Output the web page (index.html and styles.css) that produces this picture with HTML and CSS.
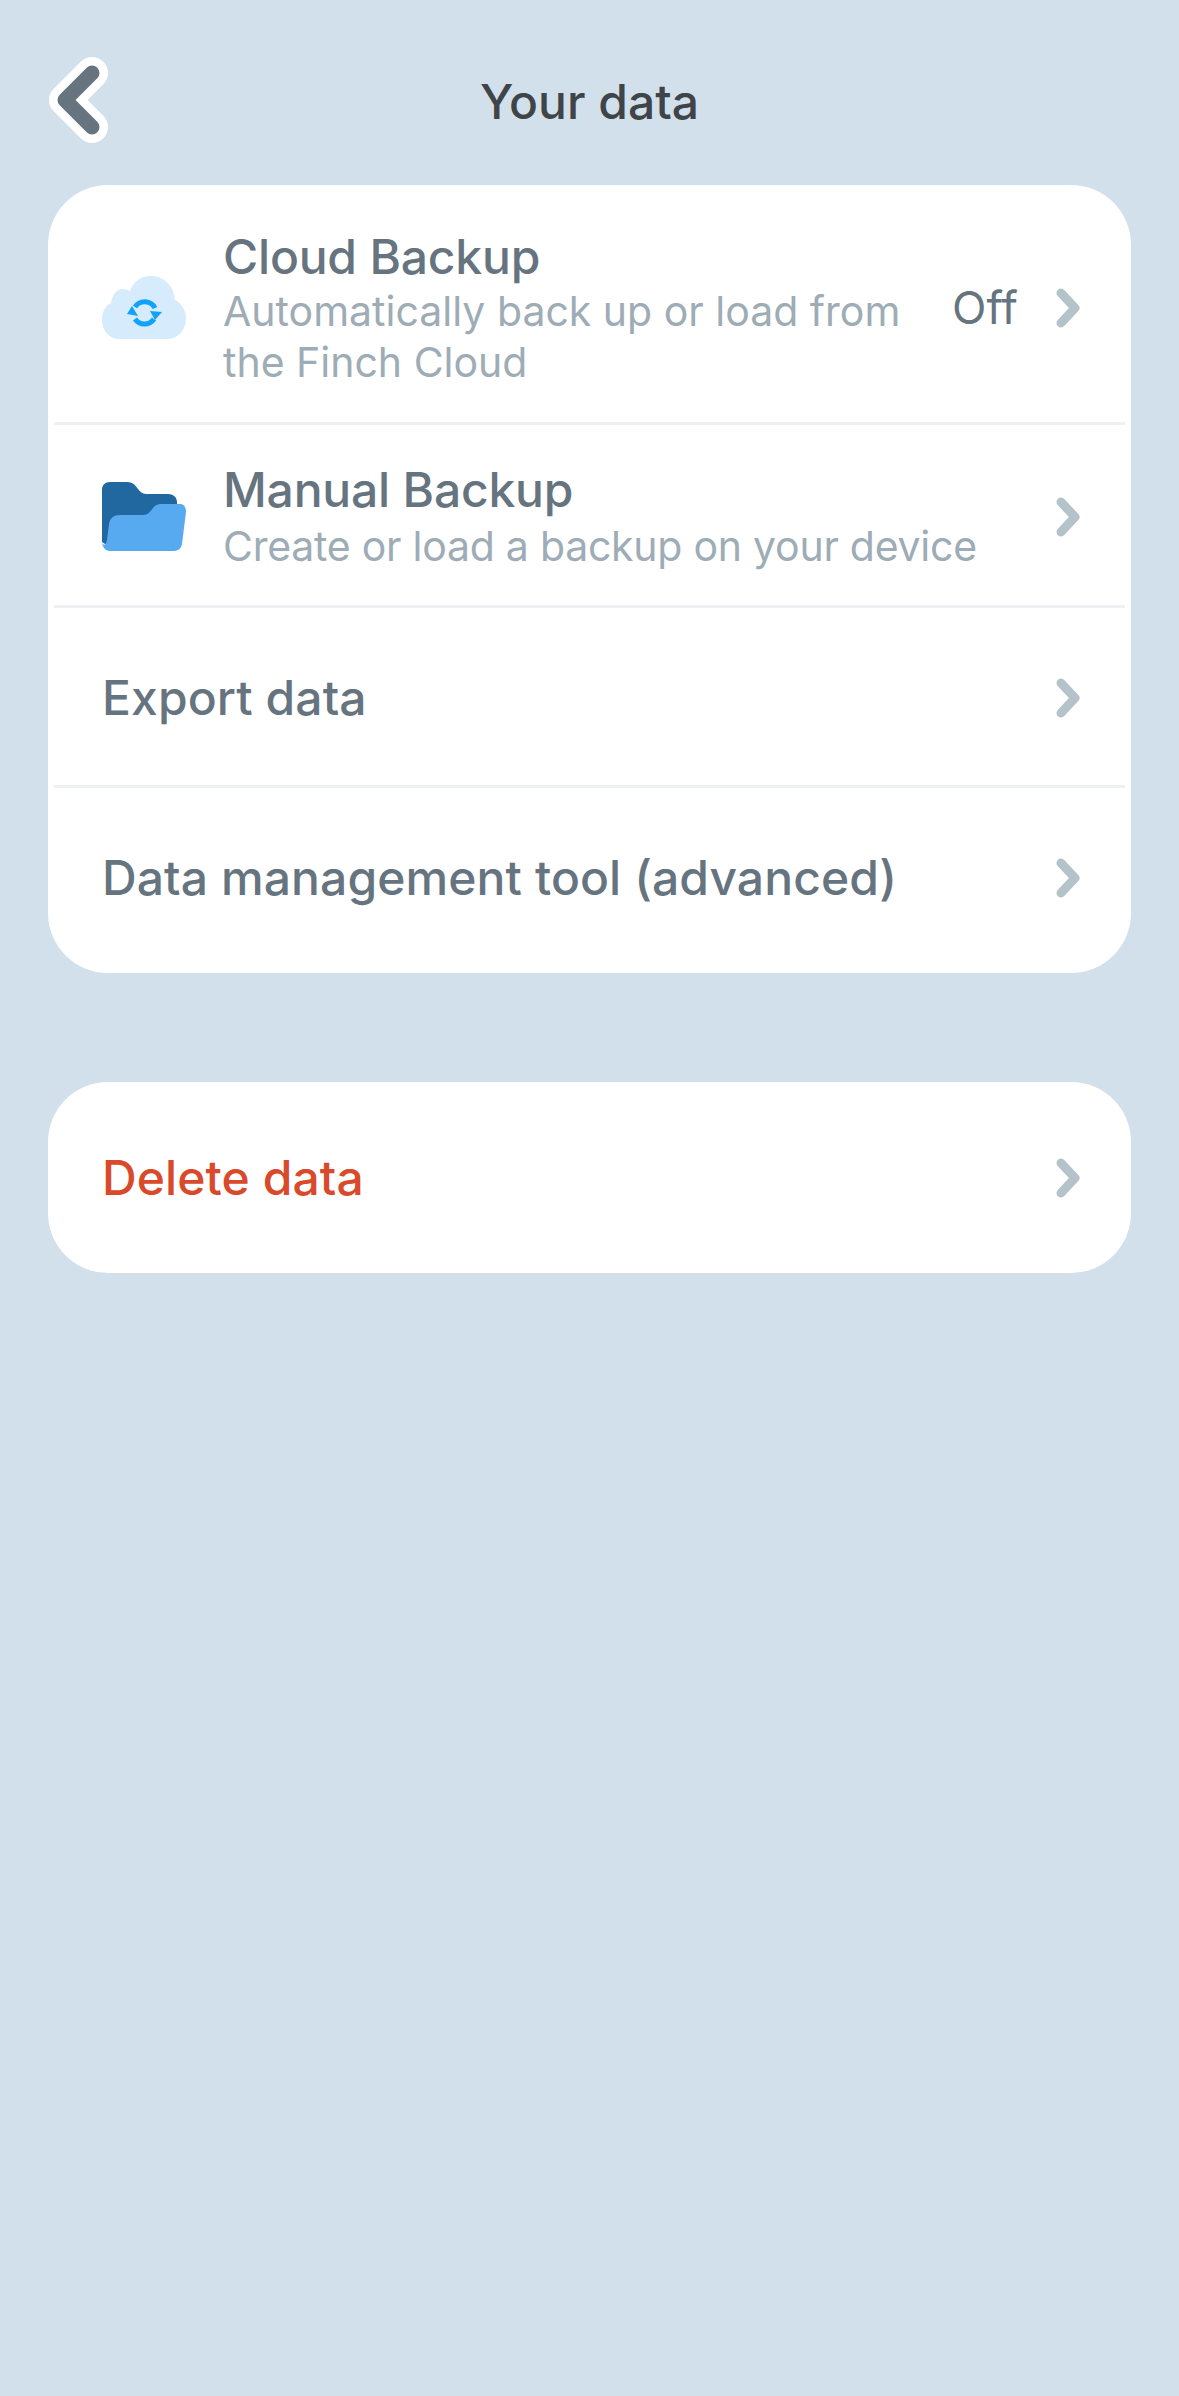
FILE: index.html
```html
<!DOCTYPE html>
<html lang="en">

<head>
  <meta charset="UTF-8" />
  <meta name="viewport" content="width=device-width, initial-scale=1.0" />
  <title>Your data</title>
  <link rel="stylesheet" href="styles.css">
</head>

<body>
  <header class="header">
    <svg class="back" width="66" height="88" viewBox="0 0 66 88">
      <path class="back-outer" d="M44 16 L17 43 L44 70" />
      <path class="back-inner" d="M44 16 L17 43 L44 70" />
    </svg>
    <h1 class="title">Your data</h1>
  </header>

  <section class="card">
    <div class="row row-cloud">
      <svg class="row-icon" width="84" height="64" viewBox="0 0 84 64">
        <path fill="#d6ecfd" d="M17 63 C7 63 0 55 0 43 C0 34 5 29 9 27 C10 19 15 13 21 13 C24 13 26 14 28 15 C31 6 39 0 49 0 C62 0 72 10 73 24 C79 27 84 34 84 42 C84 54 76 63 65 63 Z" />
        <path fill="none" stroke="#12a2fb" stroke-width="5" d="M33 31 A11.5 11.5 0 0 1 53 32" />
        <path fill="none" stroke="#12a2fb" stroke-width="5" d="M52 43 A11.5 11.5 0 0 1 33 43" />
        <path fill="#12a2fb" d="M48 35 L60 36 L53 44 Z M25 38 L36 40 L30 30 Z" />
      </svg>
      <div class="row-text">
        <div class="row-title">Cloud Backup</div>
        <div class="row-sub">Automatically back up or load from<br>the Finch Cloud</div>
      </div>
      <span class="row-value">Off</span>
      <svg class="chevron" width="24" height="40" viewBox="0 0 24 40">
        <path d="M5 5 L19 20 L5 35" />
      </svg>
    </div>
    <div class="row row-manual">
      <svg class="row-icon" width="84" height="70" viewBox="0 0 84 70">
        <path fill="#20689f" d="M0 8 C0 3 3 0 8 0 H25 C31 0 33 3 36 7 C38 10 41 12 45 12 H66 C71 12 75 15 75 20 V50 H6 V62 H3 L0 60 Z" />
        <path fill="#57aaf0" d="M7 42 C8 36 12 33 18 33 H41 C46 33 48 30 51 26 C53 23 56 22 59 22 H78 C82 22 84 25 84 30 L80 62 C79 67 76 69 71 69 H8 C4 69 1 66 0 61 C2 64 4 63 5 58 Z" />
      </svg>
      <div class="row-text">
        <div class="row-title">Manual Backup</div>
        <div class="row-sub">Create or load a backup on your device</div>
      </div>
      <svg class="chevron" width="24" height="40" viewBox="0 0 24 40">
        <path d="M5 5 L19 20 L5 35" />
      </svg>
    </div>
    <div class="row row-export">
      <div class="row-text">
        <div class="row-title row-title-strong">Export data</div>
      </div>
      <svg class="chevron" width="24" height="40" viewBox="0 0 24 40">
        <path d="M5 5 L19 20 L5 35" />
      </svg>
    </div>
    <div class="row row-last">
      <div class="row-text">
        <div class="row-title row-title-strong">Data management tool (advanced)</div>
      </div>
      <svg class="chevron" width="24" height="40" viewBox="0 0 24 40">
        <path d="M5 5 L19 20 L5 35" />
      </svg>
    </div>
  </section>

  <section class="card card-delete">
    <div class="row row-delete">
      <div class="row-text">
        <div class="row-title row-title-strong danger">Delete data</div>
      </div>
      <svg class="chevron" width="24" height="40" viewBox="0 0 24 40">
        <path d="M5 5 L19 20 L5 35" />
      </svg>
    </div>
  </section>
</body>

</html>
```

FILE: styles.css
```css
body {
  margin: 0;
  min-height: 2396px;
  padding: 0 48px;
  box-sizing: border-box;
  background-color: #d2e0ec;
  font-family: Inter, "Open Sans", sans-serif;
  color: #66747f;
}

.header {
  display: flex;
  align-items: center;
  justify-content: center;
  height: 185px;
  padding-top: 17px;
  box-sizing: border-box;
  position: relative;
}

.back {
  position: absolute;
  left: 0;
  top: 57px;
  overflow: visible;
}

.back-outer,
.back-inner {
  fill: none;
  stroke-linecap: round;
  stroke-linejoin: round;
}

.back-outer {
  stroke: #ffffff;
  stroke-width: 32px;
}

.back-inner {
  stroke: #66747f;
  stroke-width: 15px;
}

.title {
  margin: 0;
  font-size: 48px;
  font-weight: 500;
  color: #3f4448;
}

.card {
  background-color: #ffffff;
  border-radius: 60px;
  padding: 0 6px;
}

.card-delete {
  margin-top: 109px;
}

.row {
  display: flex;
  align-items: center;
  box-sizing: border-box;
  padding: 0 45px 0 48px;
  border-bottom: 3px solid #eff0f1;
}

.row-cloud {
  height: 240px;
  padding-top: 8px;
}

.row-manual {
  height: 183px;
  padding-top: 3px;
}

.row-manual .row-title {
  margin-bottom: 2px;
}

.row-export {
  height: 180px;
  padding-top: 3px;
}

.row-last {
  height: 185px;
  padding-bottom: 6px;
  border-bottom: none;
}

.row-delete {
  height: 191px;
  border-bottom: none;
}

.row-icon {
  flex-shrink: 0;
  margin-right: 37px;
}

.row-text {
  flex: 1;
  min-width: 0;
}

.row-title {
  font-size: 48px;
  font-weight: 500;
  line-height: 58px;
  letter-spacing: -0.2px;
}

.row-title-strong {
  font-weight: 550;
  letter-spacing: 0.1px;
}

.row-sub {
  font-size: 41px;
  line-height: 51px;
  color: #9eacb6;
}

.row-manual .row-sub {
  letter-spacing: -0.25px;
}

.row-value {
  font-size: 45px;
  margin-right: 38px;
}

.danger {
  color: #d9492b;
}

.chevron {
  flex-shrink: 0;
}

.chevron path {
  fill: none;
  stroke: #b4c2ca;
  stroke-width: 9px;
  stroke-linecap: round;
  stroke-linejoin: round;
}
```
